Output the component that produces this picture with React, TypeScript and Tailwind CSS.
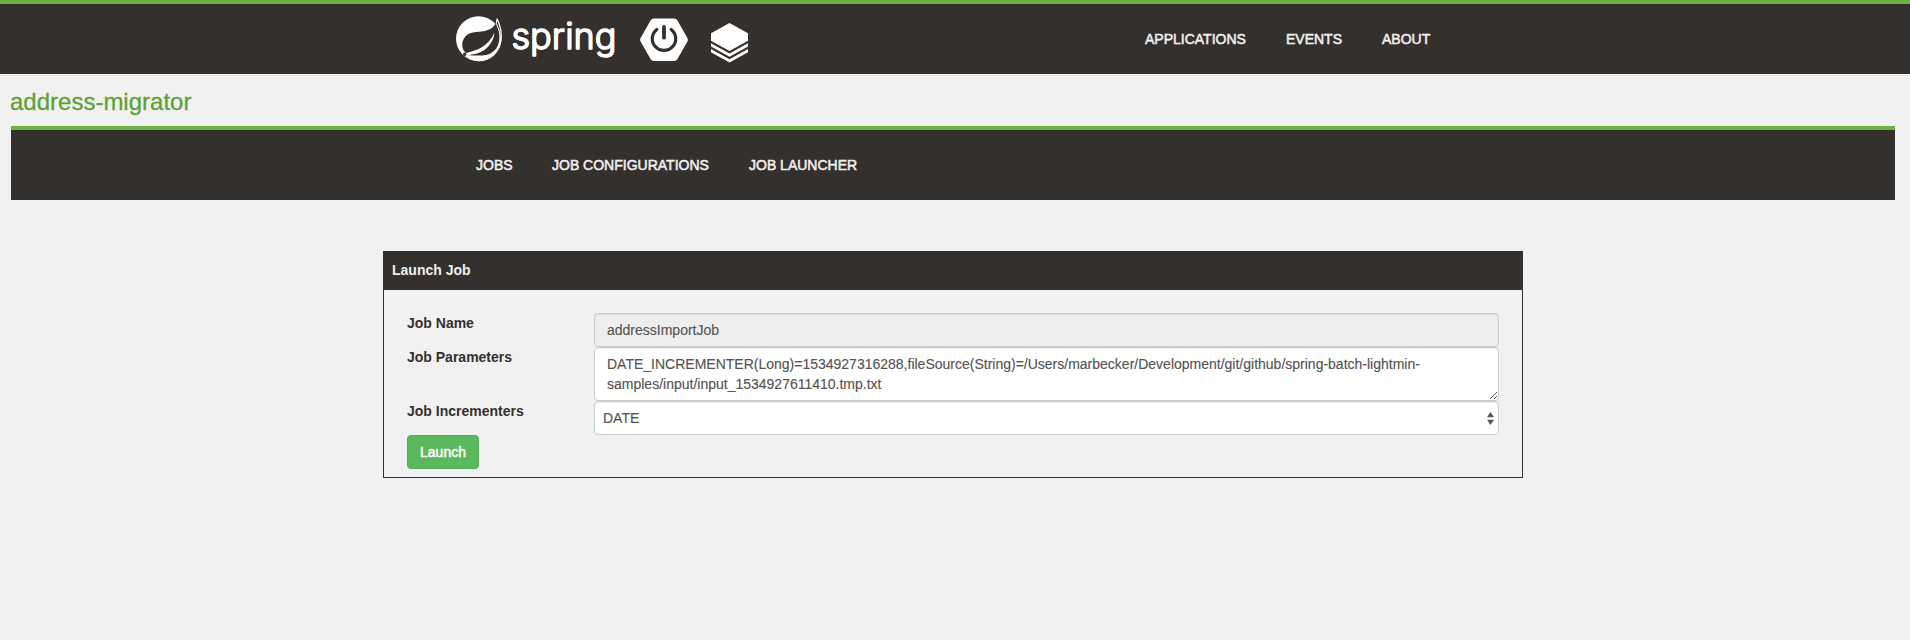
const font = 'font-["Liberation_Sans",Arial,sans-serif]';

function NavLink({ children, w }: { children: string; w: string }) {
  return (
    <a href="#" className={`block whitespace-nowrap text-sm leading-5 text-[#f1f1f1] [-webkit-text-stroke:0.5px_#f1f1f1] ${w}`}>
      {children}
    </a>
  );
}

function Leaf() {
  return (
    <svg className="size-[46px] shrink-0" viewBox="0.3 0 46 46">
      <circle cx="22.8" cy="22.7" r="22.5" fill="#fff" />
      <path d="M38 2 46 0v16z" fill="#34302d" />
      <path d="M41.600 3.200c3.600 8 5 17 3 24.500-2.200 8.500-9.500 16.500-21.500 17" fill="none" stroke="#fff" strokeWidth="1.300" />
      <path d="M40.600 6.200c-3 6.200-8 8.400-15 9.300-7 .8-12.500.8-16.200 5.200-4.200 5.200-3.800 12.600 1.100 16.200 10-1.800 22.500-6.500 28.300-20.300-.8 10-8.500 18.500-16.800 20.700-4.200 1.100-7.500 1.500-10.800 2.100 6.800-.4 15.800 1.400 22.500-1.500 10.800-4.800 12.500-17 6.900-31.700z" fill="#34302d" />
      <path d="m41.300 2.500-.7 4.700 3 8" fill="none" stroke="#fff" strokeWidth="1" />
      <circle cx="9" cy="38.200" r="1.700" fill="#34302d" />
    </svg>
  );
}

function Wordmark() {
  return (
    <svg className="ml-[8px] h-[46px] w-[108px] shrink-0 overflow-visible" viewBox="0 0 108 46">
      <text x="1.500" y="32.700" textLength="105" lengthAdjust="spacingAndGlyphs" fontFamily="Inter, sans-serif" fontSize="35.500" fontWeight="300" fill="#fff" stroke="#fff" strokeWidth="1.500" strokeLinejoin="round">
        spring
      </text>
    </svg>
  );
}

function PowerHex() {
  return (
    <svg className="h-[44px] w-[48px]" viewBox="0 0 48 44">
      <path d="M14 .5h20a4 4 0 0 1 3.300 1.800l10.100 17.700a4 4 0 0 1 0 3.500L37.300 41.200a4 4 0 0 1-3.300 1.800h-20a4 4 0 0 1-3.300-1.800L.6 23.500a4 4 0 0 1 0-3.500L10.700 2.300a4 4 0 0 1 3.300-1.800z" fill="#fff" />
      <path d="M16.800 11.500a11.700 11.700 0 1 0 14.400 0" fill="none" stroke="#34302d" strokeWidth="3.200" strokeLinecap="round" />
      <path d="M24 9v10.700" stroke="#34302d" strokeWidth="3.800" strokeLinecap="round" />
    </svg>
  );
}

function Layers() {
  return (
    <svg className="h-[40px] w-[37px]" viewBox="0 0 37 40">
      <g fill="#fff">
        <path d="M18.500 0 37 10.200v7.600L18.500 28 0 17.800v-7.600z" />
        <path d="M0 20.200 18.500 30.400 37 20.200v3.400L18.500 33.800 0 23.600z" />
        <path d="M0 26 18.500 36.200 37 26v3.300L18.500 39.500 0 29.300z" />
      </g>
    </svg>
  );
}

export default function App() {
  return (
    <div className={`min-h-[640px] bg-[#f1f1f1] text-sm leading-5 text-[#34302d] ${font}`}>
      <header className="flex h-[74px] border-t-4 border-[#6db33f] bg-[#34302d] pl-[456px]">
        <div className="flex w-[689px] items-start pt-3">
          <Leaf />
          <Wordmark />
          <div className="pl-[22px] pt-[1.500px]"><PowerHex /></div>
          <div className="pl-[23px] pt-[6.500px]"><Layers /></div>
        </div>
        <nav className="flex pt-[25px]">
          <NavLink w="w-[141px]">APPLICATIONS</NavLink>
          <NavLink w="w-[96px]">EVENTS</NavLink>
          <NavLink w="w-[60px]">ABOUT</NavLink>
        </nav>
      </header>
      <div className="h-px bg-white" />
      <div className="h-px bg-[#e7e7e7]" />
      <h1 className="h-[50px] pl-[10px] pt-[12px] text-2xl leading-[27px] text-[#5fa134] [-webkit-text-stroke:0.3px_#5fa134]">address-migrator</h1>
      <nav className="ml-[11px] flex h-[74px] w-[1884px] border-t-4 border-[#6db33f] bg-[#34302d] pl-[465px] pt-[25px]">
        <NavLink w="w-[76px]">JOBS</NavLink>
        <NavLink w="w-[197px]">JOB CONFIGURATIONS</NavLink>
        <NavLink w="w-[120px]">JOB LAUNCHER</NavLink>
      </nav>
      <section className="ml-[383px] mt-[51px] h-[227px] w-[1140px] border border-[#34302d]">
        <h2 className="h-[38px] bg-[#34302d] pl-2 pt-[8px] font-bold text-[#f1f1f1]">Launch Job</h2>
        <div className="grid grid-cols-[187px_905px] grid-rows-[34px_54px_34px] pl-[23px] pt-[23px]">
          <label className="font-bold">Job Name</label>
          <div className="rounded border border-[#ccc] bg-[#eee] px-3 py-1.5 text-[#555] [-webkit-text-stroke:0.15px_#555] shadow-[inset_0_1px_1px_rgba(0,0,0,0.075)]">addressImportJob</div>
          <label className="font-bold">Job Parameters</label>
          <div className="relative rounded border border-[#ccc] bg-white px-3 py-1.5 text-[#555] [-webkit-text-stroke:0.15px_#555] shadow-[inset_0_1px_1px_rgba(0,0,0,0.075)]">
            DATE_INCREMENTER(Long)=1534927316288,fileSource(String)=/Users/marbecker/Development/git/github/spring-batch-lightmin-<br />
            samples/input/input_1534927611410.tmp.txt
            <svg className="absolute bottom-px right-px size-[7px]" viewBox="0 0 7 7">
              <path d="M0 7 7 0M4 7l3-3" stroke="#555" strokeWidth="1" />
            </svg>
          </div>
          <label className="font-bold">Job Incrementers</label>
          <div className="flex items-start justify-between rounded border border-[#ccc] bg-white py-1.5 pl-2 pr-1 text-[#555] [-webkit-text-stroke:0.15px_#555] shadow-[inset_0_1px_1px_rgba(0,0,0,0.075)]">
            DATE
            <svg className="mt-1 h-[13px] w-[7px]" viewBox="0 0 7 13">
              <path d="M3.500 0 7 5.200H0zM0 7.800h7L3.500 13z" fill="#555" />
            </svg>
          </div>
        </div>
        <button className="ml-[23px] block h-[34px] w-[72px] rounded border border-[#4cae4c] bg-[#5cb85c] text-center text-white [-webkit-text-stroke:0.5px_#fff]">Launch</button>
      </section>
    </div>
  );
}
